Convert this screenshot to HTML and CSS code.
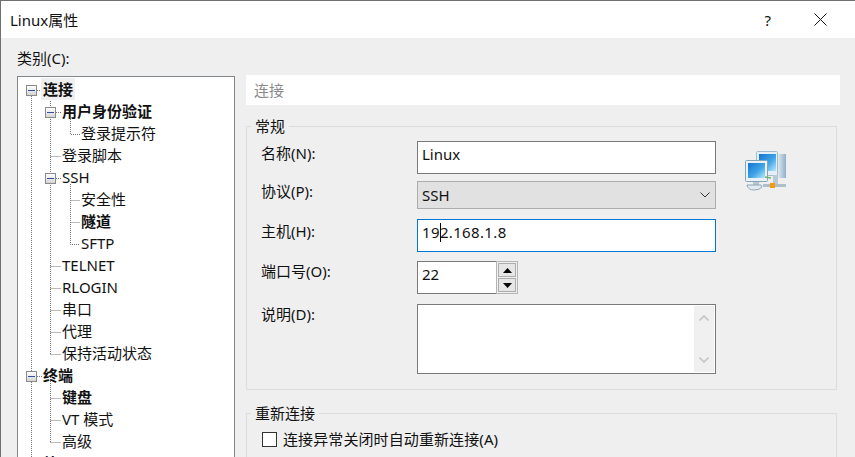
FILE: index.html
```html
<!DOCTYPE html>
<html lang="zh-CN">
<head>
    <meta charset="UTF-8">
    <title>Linux属性</title>
    <link rel="stylesheet" href="styles.css">
</head>
<body>
<div class="window">
    <div class="titlebar">
        <span class="title">Linux属性</span>
        <span class="help">?</span>
        <svg class="close" width="13" height="13" viewBox="0 0 13 13"><path d="M.5.5l12 12M12.5.5l-12 12" stroke="#111" fill="none"/></svg>
    </div>
    <div class="content">
        <div class="cat-label">类别(C):</div>
        <div class="panes">
            <div class="tree">
                <!-- tree lines -->
                <svg class="tree-lines" width="100" height="400" viewBox="0 0 100 400">
                    <g stroke="#777" stroke-dasharray="1 1" fill="none">
                        <path d="M13.5 19V400M32.5 20V277.5M32.5 300V365.5"/>
                        <path d="M52.5 42V57.5H62M52.5 107V167.5H62M52.5 123.5H62M52.5 145.5H62"/>
                        <path d="M19 13.5H24M19 299.5H24M38 35.5H43M32.5 79.5H43M38 101.5H43M32.5 189.5H43M32.5 211.5H43M32.5 233.5H43M32.5 255.5H43M32.5 277.5H43M32.5 321.5H43M32.5 343.5H43M32.5 365.5H43"/>
                    </g>
                </svg>
                <span class="exp exp-a"></span>
                <span class="exp exp-b"></span>
                <span class="exp exp-c"></span>
                <span class="exp exp-d"></span>
                <div class="row lv0"><span class="sel b">连接</span></div>
                <div class="row lv1 b">用户身份验证</div>
                <div class="row lv2">登录提示符</div>
                <div class="row lv1">登录脚本</div>
                <div class="row lv1">SSH</div>
                <div class="row lv2">安全性</div>
                <div class="row lv2 b">隧道</div>
                <div class="row lv2">SFTP</div>
                <div class="row lv1">TELNET</div>
                <div class="row lv1">RLOGIN</div>
                <div class="row lv1">串口</div>
                <div class="row lv1">代理</div>
                <div class="row lv1">保持活动状态</div>
                <div class="row lv0 b">终端</div>
                <div class="row lv1 b">键盘</div>
                <div class="row lv1">VT 模式</div>
                <div class="row lv1">高级</div>
                <div class="row lv0 b">外观</div>
            </div>
            <div class="side">
                <div class="heading">连接</div>
                <fieldset class="group general">
                    <legend>常规</legend>
                    <div class="form">
                        <div class="form-rows">
                            <div class="frow r-name"><label>名称(N):</label><div class="field">Linux</div></div>
                            <div class="frow r-proto"><label>协议(P):</label>
                                <div class="select">SSH
                                    <svg width="10" height="6" viewBox="0 0 10 6"><path d="M.5.5L5 5 9.5.5" stroke="#333" fill="none"/></svg>
                                </div>
                            </div>
                            <div class="frow r-host"><label>主机(H):</label><div class="field focus">19<i class="caret"></i>2.168.1.8</div></div>
                            <div class="frow r-port"><label>端口号(O):</label>
                                <div class="field port">22</div>
                                <div class="spin">
                                    <span class="spin-btn"><svg width="9" height="5" viewBox="0 0 9 5"><path d="M4.5 0L9 5H0z"/></svg></span>
                                    <span class="spin-btn"><svg width="9" height="5" viewBox="0 0 9 5"><path d="M0 0H9L4.5 5z"/></svg></span>
                                </div>
                            </div>
                            <div class="frow r-desc"><label>说明(D):</label>
                                <div class="field memo">
                                    <div class="scroll">
                                        <svg width="10" height="6" viewBox="0 0 10 6"><path d="M.5 5.5L5 1l4.5 4.5" stroke="#c4c4c4" stroke-width="1.6" fill="none"/></svg>
                                        <svg width="10" height="6" viewBox="0 0 10 6"><path d="M.5.5L5 5 9.5.5" stroke="#c4c4c4" stroke-width="1.6" fill="none"/></svg>
                                    </div>
                                </div>
                            </div>
                        </div>
                        <svg class="net-icon" width="42" height="40" viewBox="0 0 42 40">
                            <defs>
                                <linearGradient id="scr" x1="0" y1="0" x2="1" y2="1">
                                    <stop offset="0" stop-color="#1673cf"/>
                                    <stop offset=".55" stop-color="#3fa4e8"/>
                                    <stop offset="1" stop-color="#b9e8fb"/>
                                </linearGradient>
                                <linearGradient id="case" x1="0" y1="0" x2="1" y2="0">
                                    <stop offset="0" stop-color="#f2f6f9"/>
                                    <stop offset="1" stop-color="#8fb0c8"/>
                                </linearGradient>
                                <filter id="soft"><feGaussianBlur stdDeviation=".35"/></filter>
                            </defs>
                            <g filter="url(#soft)">
                                <path d="M31 3h10v24H31z" fill="url(#case)"/>
                                <rect x="11.500" y=".5" width="21" height="24" rx="1" fill="#e6eff5" stroke="#a3bccd"/>
                                <rect x="14" y="3" width="17" height="17" fill="url(#scr)"/>
                                <path d="M18 33h23v3H18z" fill="#aebfcc"/>
                                <path d="M28 24h5v9h-5z" fill="#b9cad6"/>
                                <rect x=".5" y="9.500" width="22" height="21" rx="1" fill="#eaf2f7" stroke="#86a3b8"/>
                                <rect x="3" y="12" width="17" height="15" fill="url(#scr)"/>
                                <path d="M8 31h6v3H8z" fill="#b7c7d2"/>
                                <path d="M2 34q1 5 7 5t8-3l-1-2z" fill="#e3ebf1" stroke="#8fa7b8"/>
                                <path d="M20 26l6 1" stroke="#6fb56f" stroke-width="1.500"/>
                            </g>
                            <rect x="25" y="32" width="5" height="5" fill="#f59a0c"/>
                        </svg>
                    </div>
                </fieldset>
                <fieldset class="group reconnect">
                    <legend>重新连接</legend>
                    <div class="check"><span class="box"></span>连接异常关闭时自动重新连接(A)</div>
                </fieldset>
            </div>
        </div>
    </div>
</div>
</body>
</html>
```

FILE: styles.css
```css
html, body {
    margin: 0;
    height: 457px;
    overflow: hidden;
}
body {
    font: 15px/22px "Noto Sans", "Noto Sans CJK SC", sans-serif;
    color: #111;
    background: #efefef;
}
.window {
    height: 456px;
    border-top: 1px solid #707070;
    border-left: 1px solid #707070;
    overflow: hidden;
}

.titlebar {
    display: flex;
    align-items: center;
    height: 37px;
    line-height: 36px;
    background: #fff;
    padding-left: 9px;
}
.title {
    flex: 1;
}
.help {
    margin-right: 43px;
    font-size: 15px;
}
.close {
    margin-right: 28px;
}

.content {
    padding-left: 16px;
}
.cat-label {
    height: 38px;
    line-height: 40px;
}
.panes {
    display: flex;
    gap: 11px;
}

.tree {
    position: relative;
    flex: none;
    width: 218px;
    height: 420px;
    background: #fff;
    border: 1px solid #82878c;
    box-sizing: border-box;
    padding-top: 1px;
}
.tree-lines {
    position: absolute;
    left: 0;
    top: 0;
}
.exp {
    position: absolute;
    width: 9px;
    height: 9px;
    background: linear-gradient(#fff, #d4d4d4);
    border: 1px solid #8a8a8a;
}
.exp::after {
    content: "";
    position: absolute;
    left: 1px;
    right: 1px;
    top: 4px;
    height: 1px;
    background: #2f4f9e;
}
.exp-a { left: 8px; top: 8px; }
.exp-b { left: 27px; top: 30px; }
.exp-c { left: 27px; top: 96px; }
.exp-d { left: 8px; top: 294px; }

.row {
    position: relative;
    height: 22px;
    line-height: 22px;
    white-space: nowrap;
}
.lv0 { padding-left: 25px; }
.lv1 { padding-left: 44px; }
.lv2 { padding-left: 63px; }
.b {
    font-weight: 700;
}
.sel {
    display: inline-block;
    background: #efefef;
    padding: 0 2px;
    margin-left: -2px;
}

.side {
    width: 594px;
}
.heading {
    height: 30px;
    line-height: 30px;
    margin-top: -1px;
    padding-left: 8px;
    background: #fff;
    color: #8a8a8a;
}
.group {
    margin: 0 3px 0 0;
    padding: 0;
    border: 1px solid #dcdcdc;
    min-width: 0;
}
.group legend {
    margin-left: 4px;
    padding: 0 4px;
    line-height: 22px;
}
.general {
    height: 275px;
    margin-top: 10px;
    box-sizing: border-box;
}
.reconnect {
    margin-top: 12px;
    height: 80px;
    box-sizing: border-box;
}

.form {
    display: flex;
    padding: 4px 0 0 14px;
}
.form-rows {
    width: 455px;
}
.frow {
    display: flex;
    align-items: flex-start;
}
.frow label {
    flex: none;
    width: 156px;
}
.r-name label { margin-top: 1px; }
.r-proto { margin-top: 7px; }
.r-proto label { margin-top: -1px; }
.r-host { margin-top: 10px; }
.r-host label { margin-top: 1px; }
.r-port { margin-top: 9px; }
.r-port label { margin-top: -1px; }
.r-desc { margin-top: 10px; }
.r-desc label { margin-top: -1px; }

.field {
    flex: none;
    width: 299px;
    height: 33px;
    line-height: 25px;
    box-sizing: border-box;
    border: 1px solid #7a7a7a;
    background: #fff;
    padding-left: 4px;
}
.field.focus {
    border-color: #0078d7;
    letter-spacing: .35px;
}
.caret {
    display: inline-block;
    width: 1px;
    height: 19px;
    background: #000;
    vertical-align: -4px;
    margin-right: -1px;
}
.select {
    flex: none;
    display: flex;
    align-items: center;
    justify-content: space-between;
    width: 299px;
    height: 28px;
    box-sizing: border-box;
    padding: 0 5px 0 4px;
    background: #e1e1e1;
    border: 1px solid #adadad;
}
.field.port {
    width: 79px;
    border-right: 0;
}
.spin {
    display: flex;
    flex-direction: column;
    gap: 1px;
    box-sizing: border-box;
    width: 22px;
    height: 33px;
    padding: 1px;
    border: 1px solid #b5b5b5;
}
.spin-btn {
    flex: 1;
    display: flex;
    align-items: center;
    justify-content: center;
    background: #e6e6e6;
    border: 1px solid #adadad;
}
.memo {
    display: flex;
    justify-content: flex-end;
    height: 70px;
    padding: 1px;
}
.scroll {
    display: flex;
    flex-direction: column;
    align-items: center;
    justify-content: space-between;
    width: 20px;
    padding: 9px 0;
    box-sizing: border-box;
    background: #f0f0f0;
}

.net-icon {
    flex: none;
    margin: 10px 0 0 29px;
}

.check {
    display: flex;
    align-items: center;
    gap: 6px;
    padding: 4px 0 0 15px;
    letter-spacing: .1px;
}
.box {
    width: 15px;
    height: 15px;
    box-sizing: border-box;
    border: 1px solid #333;
    background: #fff;
}
```
